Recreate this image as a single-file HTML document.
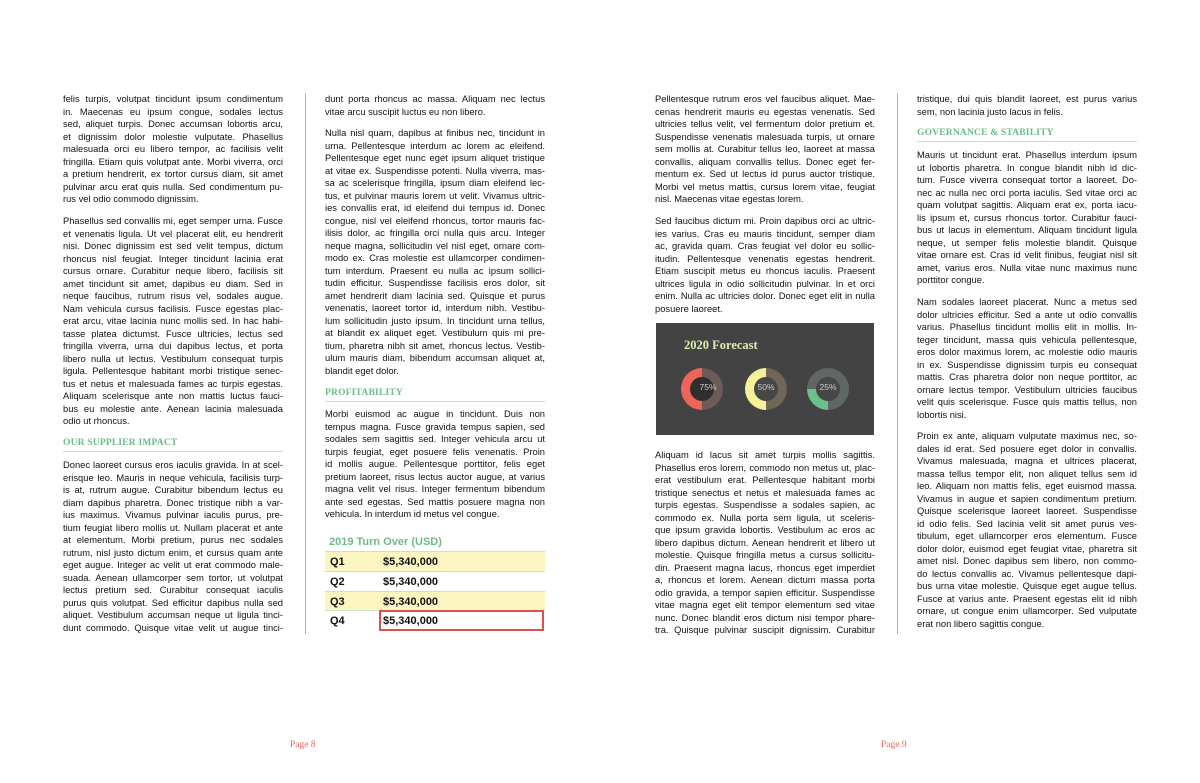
<!DOCTYPE html>
<html><head><meta charset="utf-8"><style>
*{margin:0;padding:0;box-sizing:border-box}
body{width:1200px;height:783px;background:#fff;position:relative;overflow:hidden;font-family:"Liberation Sans",Arial,sans-serif;color:#111}
.c{position:absolute;width:220px;font-size:9.35px}
.p{position:absolute;left:0;width:220px}
.p div{height:12.5px;line-height:12.5px;white-space:nowrap;text-align:justify;text-align-last:justify}
.p div.e{text-align-last:left}
.h{position:absolute;left:0;width:220px;font-family:"Liberation Serif",serif;font-weight:bold;font-size:9.5px;color:#6dbb8a;height:15px;line-height:12px;border-bottom:1px solid #c9ddd0;letter-spacing:.2px}
.v{position:absolute;top:93px;width:1px;height:541px;background:#8cc7a2}
.pg{position:absolute;top:740px;font-family:"Liberation Serif",serif;font-size:9.5px;color:#e06a5e}
.tt{position:absolute;left:0;width:220px;font-weight:bold;font-size:11px;color:#6dbb8a;padding-left:4px;height:19px;line-height:19px}
.row{position:absolute;left:0;width:220px;height:19.5px;line-height:21px;font-weight:bold;font-size:11px;color:#111;border-top:1px solid #cfe0c8}
.row span{position:absolute;left:58px}
.row b{position:absolute;left:5px}
.dn{position:absolute;width:42px;height:42px;border-radius:50%}
.dn i{position:absolute;left:9px;top:9px;width:24px;height:24px;border-radius:50%;display:block}
.dn em{position:absolute;left:0;width:42px;top:14px;text-align:center;font-style:normal;font-size:8.5px;color:#ccc}
</style></head><body>

<div class="c" style="left:63px;top:1px">
<div class="p" style="top:92px">
<div>felis turpis, volutpat tincidunt ipsum condimentum</div>
<div>in. Maecenas eu ipsum congue, sodales lectus</div>
<div>sed, aliquet turpis. Donec accumsan lobortis arcu,</div>
<div>et dignissim dolor molestie vulputate. Phasellus</div>
<div>malesuada orci eu libero tempor, ac facilisis velit</div>
<div>fringilla. Etiam quis volutpat ante. Morbi viverra, orci</div>
<div>a pretium hendrerit, ex tortor cursus diam, sit amet</div>
<div>pulvinar arcu erat quis nulla. Sed condimentum pu-</div>
<div class="e">rus vel odio commodo dignissim.</div>
</div>
<div class="p" style="top:214px">
<div>Phasellus sed convallis mi, eget semper urna. Fusce</div>
<div>et venenatis ligula. Ut vel placerat elit, eu hendrerit</div>
<div>nisi. Donec dignissim est sed velit tempus, dictum</div>
<div>rhoncus nisl feugiat. Integer tincidunt lacinia erat</div>
<div>cursus ornare. Curabitur neque libero, facilisis sit</div>
<div>amet tincidunt sit amet, dapibus eu diam. Sed in</div>
<div>neque faucibus, rutrum risus vel, sodales augue.</div>
<div>Nam vehicula cursus facilisis. Fusce egestas plac-</div>
<div>erat arcu, vitae lacinia nunc mollis sed. In hac habi-</div>
<div>tasse platea dictumst. Fusce ultricies, lectus sed</div>
<div>fringilla viverra, urna dui dapibus lectus, et porta</div>
<div>libero nulla ut lectus. Vestibulum consequat turpis</div>
<div>ligula. Pellentesque habitant morbi tristique senec-</div>
<div>tus et netus et malesuada fames ac turpis egestas.</div>
<div>Aliquam scelerisque ante non mattis luctus fauci-</div>
<div>bus eu molestie ante. Aenean lacinia malesuada</div>
<div class="e">odio ut rhoncus.</div>
</div>
<div class="h" style="top:436px">OUR SUPPLIER IMPACT</div>
<div class="p" style="top:458px">
<div>Donec laoreet cursus eros iaculis gravida. In at scel-</div>
<div>erisque leo. Mauris in neque vehicula, facilisis turp-</div>
<div>is at, rutrum augue. Curabitur bibendum lectus eu</div>
<div>diam dapibus pharetra. Donec tristique nibh a var-</div>
<div>ius maximus. Vivamus pulvinar iaculis purus, pre-</div>
<div>tium feugiat libero mollis ut. Nullam placerat et ante</div>
<div>at elementum. Morbi pretium, purus nec sodales</div>
<div>rutrum, nisl justo dictum enim, et cursus quam ante</div>
<div>eget augue. Integer ac velit ut erat commodo male-</div>
<div>suada. Aenean ullamcorper sem tortor, ut volutpat</div>
<div>lectus pretium sed. Curabitur consequat iaculis</div>
<div>purus quis volutpat. Sed efficitur dapibus nulla sed</div>
<div>aliquet. Vestibulum accumsan neque ut ligula tinci-</div>
<div>dunt commodo. Quisque vitae velit ut augue tinci-</div>
</div>
</div>
<div class="v" style="left:305px"></div>

<div class="c" style="left:325px;top:1px">
<div class="p" style="top:92px">
<div>dunt porta rhoncus ac massa. Aliquam nec lectus</div>
<div class="e">vitae arcu suscipit luctus eu non libero.</div>
</div>
<div class="p" style="top:126px">
<div>Nulla nisl quam, dapibus at finibus nec, tincidunt in</div>
<div>urna. Pellentesque interdum ac lorem ac eleifend.</div>
<div>Pellentesque eget nunc eget ipsum aliquet tristique</div>
<div>at vitae ex. Suspendisse potenti. Nulla viverra, mas-</div>
<div>sa ac scelerisque fringilla, ipsum diam eleifend lec-</div>
<div>tus, et pulvinar mauris lorem ut velit. Vivamus ultric-</div>
<div>ies convallis erat, id eleifend dui tempus id. Donec</div>
<div>congue, nisl vel eleifend rhoncus, tortor mauris fac-</div>
<div>ilisis dolor, ac fringilla orci nulla quis arcu. Integer</div>
<div>neque magna, sollicitudin vel nisl eget, ornare com-</div>
<div>modo ex. Cras molestie est ullamcorper condimen-</div>
<div>tum interdum. Praesent eu nulla ac ipsum sollici-</div>
<div>tudin efficitur. Suspendisse facilisis eros dolor, sit</div>
<div>amet hendrerit diam lacinia sed. Quisque et purus</div>
<div>venenatis, laoreet tortor id, interdum nibh. Vestibu-</div>
<div>lum sollicitudin justo ipsum. In tincidunt urna tellus,</div>
<div>at blandit ex aliquet eget. Vestibulum quis mi pre-</div>
<div>tium, pharetra nibh sit amet, rhoncus lectus. Vestib-</div>
<div>ulum mauris diam, bibendum accumsan aliquet at,</div>
<div class="e">blandit eget dolor.</div>
</div>
<div class="h" style="top:386px">PROFITABILITY</div>
<div class="p" style="top:407px">
<div>Morbi euismod ac augue in tincidunt. Duis non</div>
<div>tempus magna. Fusce gravida tempus sapien, sed</div>
<div>sodales sem sagittis sed. Integer vehicula arcu ut</div>
<div>turpis feugiat, eget posuere felis venenatis. Proin</div>
<div>id mollis augue. Pellentesque porttitor, felis eget</div>
<div>pretium laoreet, risus lectus auctor augue, at varius</div>
<div>magna velit vel risus. Integer fermentum bibendum</div>
<div>ante sed egestas. Sed mattis posuere magna non</div>
<div class="e">vehicula. In interdum id metus vel congue.</div>
</div>
</div>
<div class="c" style="left:325px;top:0">
<div class="tt" style="top:533px">2019 Turn Over (USD)</div>
<div class="row" style="top:551px;background:#fbf5bf"><b>Q1</b><span>$5,340,000</span></div>
<div class="row" style="top:571px"><b>Q2</b><span>$5,340,000</span></div>
<div class="row" style="top:591px;background:#fbf5bf"><b>Q3</b><span>$5,340,000</span></div>
<div class="row" style="top:610px"><b>Q4</b><span>$5,340,000</span></div>
<div style="position:absolute;left:54px;top:610px;width:165px;height:21px;border:2px solid #e0504a"></div>
</div>

<div class="c" style="left:655px;top:1px">
<div class="p" style="top:92px">
<div>Pellentesque rutrum eros vel faucibus aliquet. Mae-</div>
<div>cenas hendrerit mauris eu egestas venenatis. Sed</div>
<div>ultricies tellus velit, vel fermentum dolor pretium et.</div>
<div>Suspendisse venenatis malesuada turpis, ut ornare</div>
<div>sem mollis at. Curabitur tellus leo, laoreet at massa</div>
<div>convallis, aliquam convallis tellus. Donec eget fer-</div>
<div>mentum ex. Sed ut lectus id purus auctor tristique.</div>
<div>Morbi vel metus mattis, cursus lorem vitae, feugiat</div>
<div class="e">nisl. Maecenas vitae egestas lorem.</div>
</div>
<div class="p" style="top:214px">
<div>Sed faucibus dictum mi. Proin dapibus orci ac ultric-</div>
<div>ies varius. Cras eu mauris tincidunt, semper diam</div>
<div>ac, gravida quam. Cras feugiat vel dolor eu sollic-</div>
<div>itudin. Pellentesque venenatis egestas hendrerit.</div>
<div>Etiam suscipit metus eu rhoncus iaculis. Praesent</div>
<div>ultrices ligula in odio sollicitudin pulvinar. In et orci</div>
<div>enim. Nulla ac ultricies dolor. Donec eget elit in nulla</div>
<div class="e">posuere laoreet.</div>
</div>
<div class="p" style="top:448px">
<div>Aliquam id lacus sit amet turpis mollis sagittis.</div>
<div>Phasellus eros lorem, commodo non metus ut, plac-</div>
<div>erat vestibulum erat. Pellentesque habitant morbi</div>
<div>tristique senectus et netus et malesuada fames ac</div>
<div>turpis egestas. Suspendisse a sodales sapien, ac</div>
<div>commodo ex. Nulla porta sem ligula, ut sceleris-</div>
<div>que ipsum gravida lobortis. Vestibulum ac eros ac</div>
<div>libero dapibus dictum. Aenean hendrerit et libero ut</div>
<div>molestie. Quisque fringilla metus a cursus sollicitu-</div>
<div>din. Praesent magna lacus, rhoncus eget imperdiet</div>
<div>a, rhoncus et lorem. Aenean dictum massa porta</div>
<div>odio gravida, a tempor sapien efficitur. Suspendisse</div>
<div>vitae magna eget elit tempor elementum sed vitae</div>
<div>nunc. Donec blandit eros dictum nisi tempor phare-</div>
<div>tra. Quisque pulvinar suscipit dignissim. Curabitur</div>
</div>
</div>
<div class="c" style="left:655px;top:0">
<div style="position:absolute;left:1px;top:323px;width:218px;height:112px;background:#434343">
<div style="position:absolute;left:28px;top:15px;font-family:'Liberation Serif',serif;font-weight:bold;font-size:12.5px;color:#dcefb0">2020 Forecast</div>
<div class="dn" style="left:25px;top:45px;background:conic-gradient(#6e5b59 45deg 180deg,#f0635b 180deg 405deg)"><i style="background:#2f2f2f"></i><em style="left:6px">75%</em></div>
<div class="dn" style="left:89px;top:45px;background:conic-gradient(#6f6656 0 180deg,#f7f09a 180deg 360deg)"><i style="background:#474747"></i><em>50%</em></div>
<div class="dn" style="left:151px;top:45px;background:conic-gradient(#5f6762 0 180deg,#6cc08e 180deg 270deg,#5f6762 270deg)"><i style="background:#474747"></i><em>25%</em></div>
</div>
</div>
<div class="v" style="left:897px"></div>

<div class="c" style="left:917px;top:1px">
<div class="p" style="top:92px">
<div>tristique, dui quis blandit laoreet, est purus varius</div>
<div class="e">sem, non lacinia justo lacus in felis.</div>
</div>
<div class="h" style="top:126px">GOVERNANCE &amp; STABILITY</div>
<div class="p" style="top:148px">
<div>Mauris ut tincidunt erat. Phasellus interdum ipsum</div>
<div>ut lobortis pharetra. In congue blandit nibh id dic-</div>
<div>tum. Fusce viverra consequat tortor a laoreet. Do-</div>
<div>nec ac nulla nec orci porta iaculis. Sed vitae orci ac</div>
<div>quam volutpat sagittis. Aliquam erat ex, porta iacu-</div>
<div>lis ipsum et, cursus rhoncus tortor. Curabitur fauci-</div>
<div>bus ut lacus in elementum. Aliquam tincidunt ligula</div>
<div>neque, ut semper felis molestie blandit. Quisque</div>
<div>vitae ornare est. Cras id velit finibus, feugiat nisl sit</div>
<div>amet, varius eros. Nulla vitae nunc maximus nunc</div>
<div class="e">porttitor congue.</div>
</div>
<div class="p" style="top:295px">
<div>Nam sodales laoreet placerat. Nunc a metus sed</div>
<div>dolor ultricies efficitur. Sed a ante ut odio convallis</div>
<div>varius. Phasellus tincidunt mollis elit in mollis. In-</div>
<div>teger tincidunt, massa quis vehicula pellentesque,</div>
<div>eros dolor maximus lorem, ac molestie odio mauris</div>
<div>in ex. Suspendisse dignissim turpis eu consequat</div>
<div>mattis. Cras pharetra dolor non neque porttitor, ac</div>
<div>ornare lectus tempor. Vestibulum ultricies faucibus</div>
<div>velit quis scelerisque. Fusce quis mattis tellus, non</div>
<div class="e">lobortis nisi.</div>
</div>
<div class="p" style="top:429px">
<div>Proin ex ante, aliquam vulputate maximus nec, so-</div>
<div>dales id erat. Sed posuere eget dolor in convallis.</div>
<div>Vivamus malesuada, magna et ultrices placerat,</div>
<div>massa tellus tempor elit, non aliquet tellus sem id</div>
<div>leo. Aliquam non mattis felis, eget euismod massa.</div>
<div>Vivamus in augue et sapien condimentum pretium.</div>
<div>Quisque scelerisque laoreet laoreet. Suspendisse</div>
<div>id odio felis. Sed lacinia velit sit amet purus ves-</div>
<div>tibulum, eget ullamcorper eros elementum. Fusce</div>
<div>dolor dolor, euismod eget feugiat vitae, pharetra sit</div>
<div>amet nisl. Donec dapibus sem libero, non commo-</div>
<div>do lectus convallis ac. Vivamus pellentesque dapi-</div>
<div>bus urna vitae molestie. Quisque eget augue tellus.</div>
<div>Fusce at varius ante. Praesent egestas elit id nibh</div>
<div>ornare, ut congue enim ullamcorper. Sed vulputate</div>
<div class="e">erat non libero sagittis congue.</div>
</div>
</div>

<div class="pg" style="left:290px">Page 8</div>
<div class="pg" style="left:881px">Page 9</div>
</body></html>
